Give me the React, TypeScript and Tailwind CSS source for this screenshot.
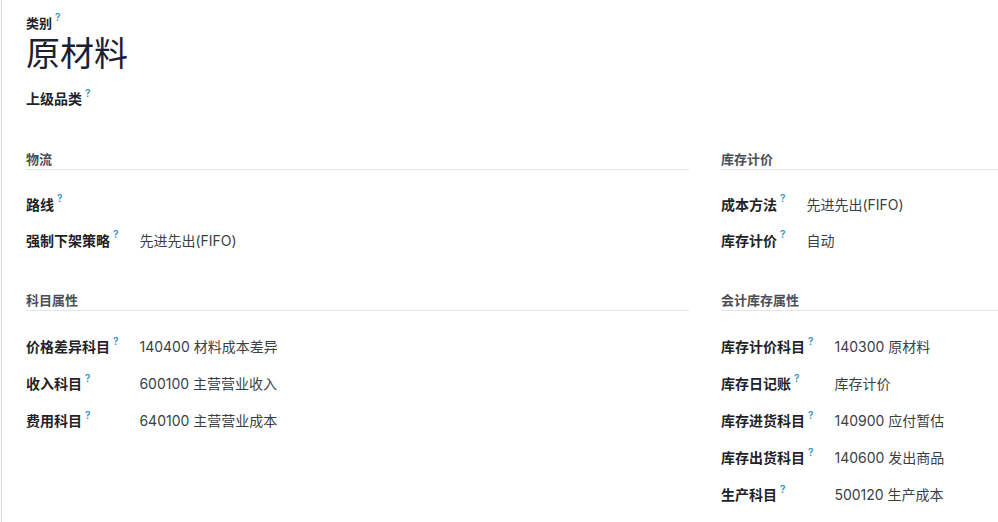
import React from "react";

const Q = () => (
  <sup className="relative -top-[6px] ml-[3px] text-[10px] font-semibold text-[#2f8fc2]">?</sup>
);

const Label = ({ text }: { text: string }) => (
  <div className="flex items-center whitespace-nowrap pr-[21px] text-[14px] font-semibold text-[#1f2328]">
    {text}
    <Q />
  </div>
);

const Value = ({ text }: { text?: string }) => (
  <div className="whitespace-nowrap text-[14px] text-[#3a3f47]">{text ?? ""}</div>
);

type Row = [string, string?];

const Section = ({
  title,
  rows,
  rowH,
  mt,
}: {
  title: string;
  rows: Row[];
  rowH: "36" | "37";
  mt: "16" | "17";
}) => (
  <div>
    <div className="border-b border-[#e2e4e8] text-[13px] leading-[20px] font-semibold text-[#4a4f57]">
      {title}
    </div>
    <div
      className={
        "grid grid-cols-[auto_1fr] items-center " +
        (rowH === "36" ? "auto-rows-[36px] " : "auto-rows-[37px] ") +
        (mt === "16" ? "mt-[16px]" : "mt-[17px]")
      }
    >
      {rows.map(([l, v], i) => (
        <React.Fragment key={i}>
          <Label text={l} />
          <Value text={v} />
        </React.Fragment>
      ))}
    </div>
  </div>
);

export default function App() {
  return (
    <div className="h-[522px] w-[998px] overflow-hidden bg-white pl-px font-[Inter,'Noto_Sans_CJK_SC',sans-serif]">
      <div className="h-full border-l border-[#d6d6d6] px-6 pt-[13px]">
        <div className="flex items-center text-[13px] leading-[20px] font-semibold text-[#1f2328]">
          类别
          <Q />
        </div>
        <div className="mt-px text-[34px] leading-[40px] text-[#1b2130]">原材料</div>
        <div className="mt-[15px] flex items-center text-[14px] leading-[20px] font-semibold text-[#1f2328]">
          上级品类
          <Q />
        </div>

        <div className="mt-[40px] grid grid-cols-[663px_663px] gap-x-[32px]">
          <div className="flex flex-col">
            <Section
              title="物流"
              rowH="36"
              mt="16"
              rows={[["路线"], ["强制下架策略", "先进先出(FIFO)"]]}
            />
            <div className="mt-[32px]">
              <Section
                title="科目属性"
                rowH="37"
                mt="17"
                rows={[
                  ["价格差异科目", "140400 材料成本差异"],
                  ["收入科目", "600100 主营营业收入"],
                  ["费用科目", "640100 主营营业成本"],
                ]}
              />
            </div>
          </div>
          <div className="flex flex-col">
            <Section
              title="库存计价"
              rowH="36"
              mt="16"
              rows={[
                ["成本方法", "先进先出(FIFO)"],
                ["库存计价", "自动"],
              ]}
            />
            <div className="mt-[32px]">
              <Section
                title="会计库存属性"
                rowH="37"
                mt="17"
                rows={[
                  ["库存计价科目", "140300 原材料"],
                  ["库存日记账", "库存计价"],
                  ["库存进货科目", "140900 应付暂估"],
                  ["库存出货科目", "140600 发出商品"],
                  ["生产科目", "500120 生产成本"],
                ]}
              />
            </div>
          </div>
        </div>
      </div>
    </div>
  );
}
